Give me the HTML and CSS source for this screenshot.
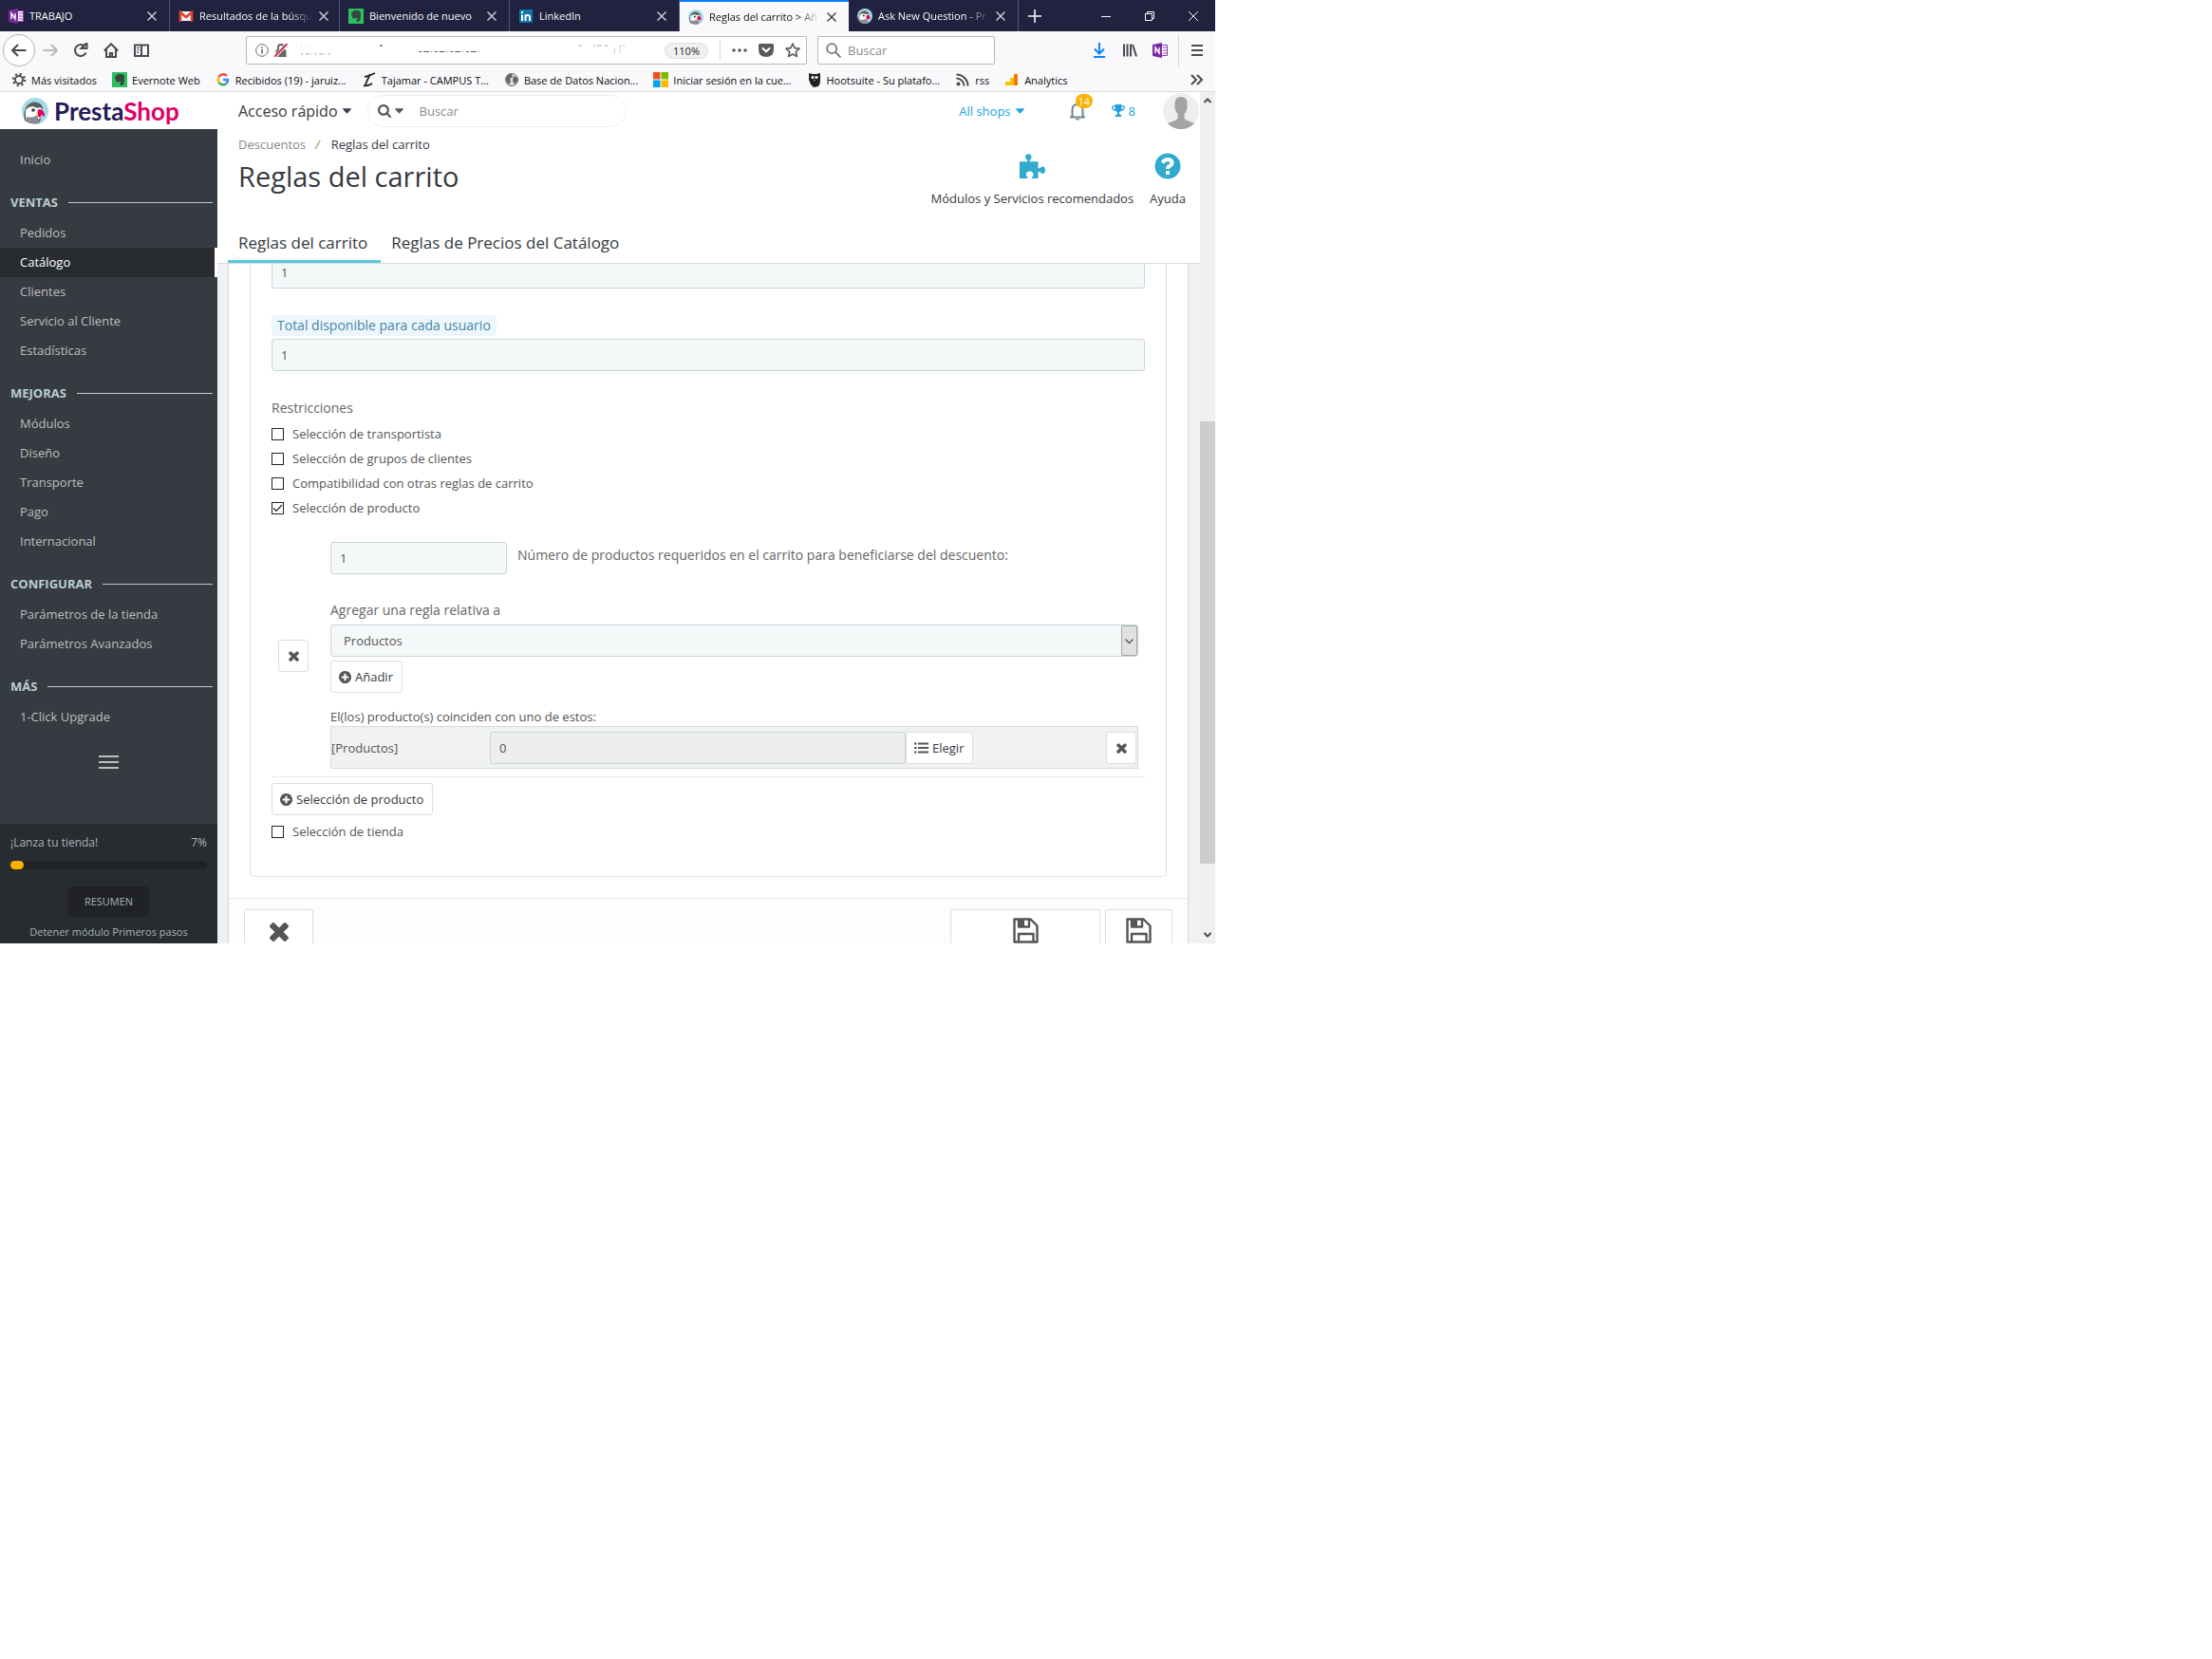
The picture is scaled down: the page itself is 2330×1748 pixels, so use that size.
FILE: index.html
```html
<!DOCTYPE html>
<html lang="es">
<head>
  <meta charset="UTF-8">
  <meta name="viewport" content="width=device-width, initial-scale=1">
  <title>Reglas del carrito</title>
  <link rel="stylesheet" href="styles.css">
</head>

<body>
  <!-- shared icons -->
  <svg class="sprite" aria-hidden="true">
    <symbol id="i-close" viewBox="0 0 12 12"><path d="M1.500 1.500l9 9M10.500 1.500l-9 9" fill="none" stroke="currentColor" stroke-width="1.500"/></symbol>
    <symbol id="i-times" viewBox="300 240 1192 1312"><path fill="currentColor" d="M1490 1322q0 40-28 68l-136 136q-28 28-68 28t-68-28l-294-294-294 294q-28 28-68 28t-68-28l-136-136q-28-28-28-68t28-68l294-294-294-294q-28-28-28-68t28-68l136-136q28-28 68-28t68 28l294 294 294-294q28-28 68-28t68 28l136 136q28 28 28 68t-28 68l-294 294 294 294q28 28 28 68z"/></symbol>
    <symbol id="i-plus" viewBox="128 128 1536 1536"><path fill="currentColor" d="M1344 960v-128q0-26-19-45t-45-19h-256v-256q0-26-19-45t-45-19h-128q-26 0-45 19t-19 45v256h-256q-26 0-45 19t-19 45v128q0 26 19 45t45 19h256v256q0 26 19 45t45 19h128q26 0 45-19t19-45v-256h256q26 0 45-19t19-45zm320-64q0 209-103 385.500t-279.500 279.500-385.500 103-385.500-103-279.500-279.500-103-385.500 103-385.500 279.500-279.500 385.500-103 385.500 103 279.500 279.500 103 385.500z"/></symbol>
    <symbol id="i-search" viewBox="64 128 1664 1664"><path fill="currentColor" d="M1216 832q0-185-131.500-316.500t-316.500-131.500-316.500 131.500-131.500 316.500 131.500 316.500 316.500 131.500 316.500-131.500 131.500-316.500zm512 832q0 52-38 90t-90 38q-54 0-90-38l-343-342q-179 124-399 124-143 0-273.500-55.500t-225-150-150-225-55.500-273.500 55.500-273.500 150-225 225-150 273.500-55.500 273.500 55.500 225 150 150 225 55.500 273.500q0 220-124 399l343 343q37 37 37 90z"/></symbol>
    <symbol id="i-caret" viewBox="0 0 10 6"><path fill="currentColor" d="M0.500 0h9q.8 0 .3.700l-4.200 4.800q-.6.500-1.200 0L.2.700Q-.3 0 .5 0z"/></symbol>
    <symbol id="i-save" viewBox="0 0 27 27"><path fill="none" stroke="currentColor" stroke-width="2.400" stroke-linejoin="round" d="M1.500 1.500h17l7 7v17h-24zM6 25v-8h15.500v8M6 2v7.500h11V2"/><path fill="currentColor" d="M6 2h6v7H6z"/></symbol>
    <symbol id="i-puffin" viewBox="0 0 28 28">
      <circle cx="14" cy="14" r="14" fill="#a4dbe8"/>
      <path fill="#5d5c60" d="M3 24C1 15 4 6 12 4.500c7-.5 11 4 10 9.500L19 26c-6 2-12 1-16-2z"/>
      <path fill="#fff" d="M4 13c3-4 8-5 12-2 3-2 6 0 6 4l-2 6-7 6c-5-1-7-2-9-5z"/>
      <path fill="#8d8c90" d="M5 20c4 1 8 1 11-2l3 8c-5 3-11 1-15-2z"/>
      <circle cx="12" cy="13" r="1.800" fill="#333"/>
      <path fill="#df0067" d="M18 12c4 0 6 3 6 8l-3-2-2 3c-3-2-4-6-1-9z"/>
      <path fill="#f9c23c" d="M17 13l-2 3 2 3z"/>
    </symbol>
    <symbol id="i-evernote" viewBox="0 0 16 16"><path fill="#2dbe60" d="M0 0h16v16H0z"/><path fill="#36473c" d="M6 2h3c3 0 4 1 4 4 0 5-1 8-3 8-2 0-2-3-.5-3L9 9c-1 2-4 2-5 0L3 5l3-3z"/></symbol>
    <symbol id="i-onenote" viewBox="0 0 16 16"><path fill="#fff" stroke="#8e44ad" d="M8 2.500h7.500v11H8zM11 5h4M11 8h4M11 11h4"/><path fill="#7a2a9f" d="M0 2l10-2v16L0 14z"/><path fill="none" stroke="#fff" stroke-width="1.400" d="M3 11V5l4 6V5"/></symbol>
  </svg>

  <div class="window">

    <!-- browser tabs -->
    <header class="tabstrip">
      <div class="tab"><svg class="fav"><use href="#i-onenote"/></svg><span class="tab-title">TRABAJO</span><button class="tab-close" aria-label="Cerrar"><svg><use href="#i-close"/></svg></button></div>
      <div class="tab"><svg class="fav" viewBox="0 0 16 16"><path fill="#f2f2f2" d="M1 3h14v10H1z"/><path fill="none" stroke="#db4437" stroke-width="2.500" d="M2 14V4l6 5 6-5v10"/></svg><span class="tab-title fade">Resultados de la búsqu</span><button class="tab-close" aria-label="Cerrar"><svg><use href="#i-close"/></svg></button></div>
      <div class="tab"><svg class="fav"><use href="#i-evernote"/></svg><span class="tab-title">Bienvenido de nuevo</span><button class="tab-close" aria-label="Cerrar"><svg><use href="#i-close"/></svg></button></div>
      <div class="tab"><svg class="fav" viewBox="0 0 16 16"><path fill="#0e76a8" d="M1 1h14v14H1z"/><path fill="none" stroke="#fff" stroke-width="2" d="M4 6.500V13M4 3v2M7.500 13V6.500M7.500 9.500q0-2.500 2.300-2.500t2.200 2.500V13"/></svg><span class="tab-title">LinkedIn</span><button class="tab-close" aria-label="Cerrar"><svg><use href="#i-close"/></svg></button></div>
      <div class="tab active"><svg class="fav"><use href="#i-puffin"/></svg><span class="tab-title fade">Reglas del carrito &gt; Añ</span><button class="tab-close" aria-label="Cerrar"><svg><use href="#i-close"/></svg></button></div>
      <div class="tab"><svg class="fav"><use href="#i-puffin"/></svg><span class="tab-title fade">Ask New Question - Pr</span><button class="tab-close" aria-label="Cerrar"><svg><use href="#i-close"/></svg></button></div>
      <button class="new-tab" aria-label="Nueva pestaña"><svg viewBox="0 0 14 14"><path d="M7 0v14M0 7h14" stroke="currentColor" stroke-width="1.600"/></svg></button>
      <div class="win-controls">
        <button aria-label="Minimizar"><svg viewBox="0 0 10 10"><path d="M0 5.500h10" stroke="currentColor"/></svg></button>
        <button aria-label="Restaurar"><svg viewBox="0 0 10 10"><path d="M.5 2.500h7v7h-7zM2.500 2.500v-2h7v7h-2" fill="none" stroke="currentColor"/></svg></button>
        <button aria-label="Cerrar ventana"><svg viewBox="0 0 10 10"><path d="M0 0l10 10M10 0L0 10" stroke="currentColor"/></svg></button>
      </div>
    </header>

    <!-- navigation bar -->
    <div class="navbar">
      <button class="nav-btn back" aria-label="Atrás"><svg viewBox="0 0 16 16"><path d="M15.500 8H1.500M7 2L1 8l6 6"/></svg></button>
      <button class="nav-btn dim" aria-label="Adelante"><svg viewBox="0 0 16 16"><path d="M.5 8h14M9 2l6 6-6 6"/></svg></button>
      <button class="nav-btn" aria-label="Recargar"><svg viewBox="0 0 16 16"><path d="M13.500 10.500A6 6 0 1 1 12.500 4M14.500 0v6h-6z"/></svg></button>
      <button class="nav-btn" aria-label="Inicio"><svg viewBox="0 0 16 16"><path d="M.8 8.500L8 1.300l7.200 7.200M3 7v8h10V7M6.800 15v-4h2.400v4"/></svg></button>
      <button class="nav-btn" aria-label="Barra lateral"><svg viewBox="0 0 16 16"><path d="M1 2.500h14v11.500H1zM8 2.500V14"/><path class="thin" d="M3 5.500h3M3 8h3M3 10.500h2"/></svg></button>

      <div class="urlbar">
        <svg class="ico-14" viewBox="0 0 14 14"><circle cx="7" cy="7" r="6.300" fill="none" stroke="#666"/><path d="M7 6v4.500M7 3.500v1.500" stroke="#555" stroke-width="1.500"/></svg>
        <svg class="ico-14" viewBox="0 0 14 14"><path fill="#666" d="M1.500 6.500h11V14h-11z"/><path fill="none" stroke="#666" stroke-width="2" d="M4 7V4a3 3 0 0 1 6 0v3"/><path stroke="#fff" stroke-width="3.500" d="M1 13.500L13 .5"/><path stroke="#d7264c" stroke-width="2" d="M0 14L13.500 0"/></svg>
        <!-- remains of the scrubbed address -->
        <svg class="scrubbed" viewBox="0 0 390 28" preserveAspectRatio="xMinYMid meet">
          <path stroke="#999" stroke-dasharray="2 3 4 2 1 3" d="M2 18h34"/><path stroke="#bbb" stroke-dasharray="1 5" d="M2 10h8"/><path stroke="#222" stroke-width="1.500" d="M88 9h2"/><path stroke="#555" stroke-dasharray="3 2 6 2 1 3" d="M130 15.500h68"/><path stroke="#aaa" stroke-dasharray="4 12 2 2 5 3" d="M303 9h50"/><path stroke="#ccc" d="M342 11v7M348 9v8"/>
        </svg>
        <button class="zoom">110%</button>
        <span class="sep"></span>
        <svg class="ico-16" viewBox="0 0 16 16" fill="#5a5a5e"><circle cx="2" cy="8" r="1.800"/><circle cx="8" cy="8" r="1.800"/><circle cx="14" cy="8" r="1.800"/></svg>
        <svg class="ico-16" viewBox="0 0 16 16"><path fill="#5a5a5e" d="M1.500 1h13q1.500 0 1.500 1.500V7q0 8-8 8T0 7V2.500Q0 1 1.500 1z"/><path fill="none" stroke="#fff" stroke-width="2" stroke-linecap="round" d="M4.500 6L8 9.300 11.500 6"/></svg>
        <svg class="ico-16" viewBox="0 0 16 16"><path fill="none" stroke="#5a5a5e" stroke-width="1.600" stroke-linejoin="round" d="M8 1l2.100 4.600 5 .5-3.800 3.400 1.100 5L8 12l-4.400 2.500 1.100-5L.9 6.100l5-.5z"/></svg>
      </div>

      <label class="searchbar">
        <svg class="ico-16" viewBox="0 0 16 16"><path fill="none" stroke="#777" stroke-width="1.800" d="M10 10l5.500 5.500M11.200 6.200a5 5 0 1 1-10 0 5 5 0 0 1 10 0z"/></svg>
        <input type="text" placeholder="Buscar" aria-label="Buscar en la web">
      </label>

      <button class="nav-btn blue" aria-label="Descargas"><svg viewBox="0 0 16 16"><path d="M8 0v11M3 6.500l5 5 5-5M2 15h12"/></svg></button>
      <button class="nav-btn" aria-label="Catálogo"><svg viewBox="0 0 16 16"><path d="M2 1.500v13M5.500 1.500v13M9 1.500v13M11 2l4 12.500"/></svg></button>
      <button class="nav-btn plain" aria-label="OneNote"><svg><use href="#i-onenote"/></svg></button>
      <span class="sep tall"></span>
      <button class="nav-btn" aria-label="Menú"><svg viewBox="0 0 16 16"><path d="M2 3h12M2 8h12M2 13h12"/></svg></button>
    </div>

    <!-- bookmarks -->
    <nav class="bookmarks">
      <a href="#"><svg class="fav" viewBox="0 0 16 16"><circle cx="8" cy="8" r="4" fill="none" stroke="#4a4a4f" stroke-width="1.800"/><circle cx="8" cy="8" r="6" fill="none" stroke="#4a4a4f" stroke-width="2.500" stroke-dasharray="2 2.710"/></svg>Más visitados</a>
      <a href="#"><svg class="fav"><use href="#i-evernote"/></svg>Evernote Web</a>
      <a href="#"><svg class="fav" viewBox="0 0 16 16" fill="none" stroke-width="2.400"><path stroke="#ea4335" d="M3.500 5.300A5 5 0 0 1 11.800 4"/><path stroke="#fbbc05" d="M3.500 5.300a5 5 0 0 0 0 5.400"/><path stroke="#34a853" d="M3.500 10.700a5 5 0 0 0 7.700 1.400"/><path stroke="#4285f4" d="M11.200 12.100A5 5 0 0 0 13 8H8"/></svg>Recibidos (19) - jaruiz...</a>
      <a href="#"><svg class="fav" viewBox="0 0 16 16"><path fill="none" stroke="#222" stroke-width="1.800" d="M3 5q5-1 11-4M9 2Q6 8 4 13M2 14q5 1 9-2"/></svg>Tajamar - CAMPUS T...</a>
      <a href="#"><svg class="fav" viewBox="0 0 16 16"><circle cx="8" cy="8" r="6.500" fill="#ddd" stroke="#666"/><path fill="#666" d="M2 6q3-5 6-4l1 3-3 2 1 3-2 3Q2 11 2 6zM10 4l4 2v4l-3 3-2-4z"/></svg>Base de Datos Nacion...</a>
      <a href="#"><svg class="fav" viewBox="0 0 16 16"><path fill="#f25022" d="M0 0h7.500v7.500H0z"/><path fill="#7fba00" d="M8.500 0H16v7.500H8.500z"/><path fill="#00a4ef" d="M0 8.500h7.500V16H0z"/><path fill="#ffb900" d="M8.500 8.500H16V16H8.500z"/></svg>Iniciar sesión en la cue...</a>
      <a href="#"><svg class="fav" viewBox="0 0 16 16"><path fill="#222" d="M2 1l4 1h4l4-1v7q0 5-2 7l-5 1-3-3-2-5z"/><circle cx="6" cy="5.500" r="1.600" fill="#fff"/><circle cx="10" cy="5.500" r="1.600" fill="#fff"/><path fill="#fff" d="M7.300 8h1.400L8 9.500z"/></svg>Hootsuite - Su platafo...</a>
      <a href="#"><svg class="fav" viewBox="0 0 16 16"><circle cx="3.500" cy="12.500" r="2" fill="#4a4a4f"/><path fill="none" stroke="#4a4a4f" stroke-width="2" d="M1.500 6.500a8 8 0 0 1 8 8M1.500 2.500a12 12 0 0 1 12 12"/></svg>rss</a>
      <a href="#"><svg class="fav" viewBox="0 0 16 16"><path fill="#ffc107" d="M1 10h5v4H1zM6 6h5v8H6z"/><path fill="#f57c00" d="M10 2h4v12h-4z"/></svg>Analytics</a>
      <button class="more" aria-label="Más marcadores"><svg viewBox="0 0 14 12"><path fill="none" stroke="currentColor" stroke-width="2" d="M1 1l5 5-5 5M7 1l5 5-5 5"/></svg></button>
    </nav>

    <div class="page">

      <!-- left column -->
      <aside class="side">
        <a class="logo" href="#"><svg><use href="#i-puffin"/></svg><span>Presta<b>Shop</b></span></a>
        <nav class="menu">
          <a href="#">Inicio</a>
          <h2>VENTAS</h2>
          <a href="#">Pedidos</a>
          <a href="#" class="current">Catálogo</a>
          <a href="#">Clientes</a>
          <a href="#">Servicio al Cliente</a>
          <a href="#">Estadísticas</a>
          <h2>MEJORAS</h2>
          <a href="#">Módulos</a>
          <a href="#">Diseño</a>
          <a href="#">Transporte</a>
          <a href="#">Pago</a>
          <a href="#">Internacional</a>
          <h2>CONFIGURAR</h2>
          <a href="#">Parámetros de la tienda</a>
          <a href="#">Parámetros Avanzados</a>
          <h2>MÁS</h2>
          <a href="#">1-Click Upgrade</a>
          <button class="burger" aria-label="Contraer menú"><svg viewBox="0 0 21 14"><path d="M0 1h21M0 7h21M0 13h21" stroke="currentColor" stroke-width="2"/></svg></button>
        </nav>
        <div class="onboarding">
          <div class="launch"><span>¡Lanza tu tienda!</span><span>7%</span></div>
          <div class="bar"><div class="bar-fill" style="width: 7%"></div></div>
          <button class="resume">RESUMEN</button>
          <a href="#">Detener módulo Primeros pasos</a>
        </div>
      </aside>

      <main class="content">
        <div class="topbar">
          <button class="quick">Acceso rápido <svg class="caret"><use href="#i-caret"/></svg></button>
          <div class="search">
            <button aria-label="Buscar en"><svg class="ico-14"><use href="#i-search"/></svg><svg class="caret"><use href="#i-caret"/></svg></button>
            <input type="text" placeholder="Buscar" aria-label="Buscar">
          </div>
          <button class="shops">All shops <svg class="caret"><use href="#i-caret"/></svg></button>
          <button class="bell" aria-label="Notificaciones">
            <svg viewBox="0 0 18 20"><path fill="none" stroke="#6c868e" stroke-width="2" d="M1 16.500h16M3.500 16V9q0-6 5.500-6t5.500 6v7M9 3V1"/><path fill="#6c868e" d="M6.500 18h5q-2.500 3.500-5 0z"/></svg>
            <span class="badge">14</span>
          </button>
          <a class="trophy" href="#"><svg viewBox="0 0 14 13"><path fill="currentColor" d="M3.500 0h7v5q-.5 2.500-2.500 3.200V10q2 .3 2.500 3h-7Q4 10.300 6 10V8.200Q4 7.500 3.500 5z"/><path fill="none" stroke="currentColor" stroke-width="1.200" d="M4 2H.7q0 4.200 4 4.500M10 2h3.300q0 4.200-4 4.500"/></svg>8</a>
          <svg class="avatar" viewBox="0 0 38 38"><circle cx="19" cy="19" r="19" fill="#eee"/><path fill="#a3a3a3" d="M12.500 11q0-7 6.500-7t6.500 7v5q-1 4-3 6v4q0 2 3 3l7.500 3a19 19 0 0 1-28 0l7.500-3q3-1 3-3v-4q-2-2-3-6z"/></svg>
        </div>

        <div class="page-head">
          <div>
            <div class="crumbs"><a href="#">Descuentos</a><i>/</i><span>Reglas del carrito</span></div>
            <h1>Reglas del carrito</h1>
          </div>
          <div class="head-actions">
            <a href="#"><svg viewBox="0 0 30 28"><path fill="currentColor" d="M1 9h9V7.500Q7.500 6 7.500 3.800 7.800.3 11 .3t3.500 3.500Q14.300 6 12.500 7.500V9H22v7.500h2q1.300-2 3-2 3 .3 3 4t-3 4q-1.700 0-3-2.200h-2V28h-7v-1.500q2-1.300 1.700-3.500-.7-3-4-3.200-3.800.2-4.500 3.200 0 2.200 2 3.500V28H1z"/></svg>Módulos y Servicios recomendados</a>
            <a href="#"><svg viewBox="0 0 28 28"><circle cx="14" cy="14" r="13.500" fill="currentColor"/><path fill="none" stroke="#fff" stroke-width="4" d="M8.500 10.500q2-3.500 5.500-3.500 4.500.3 4.500 3.500 0 2-2.300 3.300-2.200 1.200-2.200 3.200"/><path fill="#fff" d="M12 19h4v4h-4z"/></svg>Ayuda</a>
          </div>
        </div>

        <nav class="page-tabs">
          <a href="#" class="current">Reglas del carrito</a>
          <a href="#">Reglas de Precios del Catálogo</a>
        </nav>

        <div class="scroll-area">
          <form class="panel">
            <div class="box">
              <input class="field first" type="text" value="1" aria-label="Total disponible">

              <label class="hint" for="per-user">Total disponible para cada usuario</label>
              <input class="field" type="text" id="per-user" value="1">

              <p class="title">Restricciones</p>
              <label class="check"><input type="checkbox">Selección de transportista</label>
              <label class="check"><input type="checkbox">Selección de grupos de clientes</label>
              <label class="check"><input type="checkbox">Compatibilidad con otras reglas de carrito</label>
              <label class="check"><input type="checkbox" checked>Selección de producto</label>

              <div class="group">
                <button type="button" class="btn square" aria-label="Eliminar"><svg class="times"><use href="#i-times"/></svg></button>
                <div>
                  <div class="qty">
                    <input class="field" type="text" id="qty" value="1">
                    <label for="qty">Número de productos requeridos en el carrito para beneficiarse del descuento:</label>
                  </div>
                  <label class="rule-label" for="rule">Agregar una regla relativa a</label>
                  <select id="rule" class="field"><option>Productos</option></select>
                  <button type="button" class="btn"><svg class="plus"><use href="#i-plus"/></svg>Añadir</button>
                  <p class="match">El(los) producto(s) coinciden con uno de estos:</p>
                  <table class="rules">
                    <tr>
                      <td class="name">[Productos]</td>
                      <td class="count"><input class="field" type="text" value="0" aria-label="Productos" disabled></td>
                      <td><button type="button" class="btn"><svg class="list" viewBox="0 0 15 12"><path stroke="currentColor" stroke-width="2.200" d="M0 1.500h2.500M4 1.500h11M0 6h2.500M4 6h11M0 10.500h2.500M4 10.500h11"/></svg>Elegir</button></td>
                      <td class="last"><button type="button" class="btn square" aria-label="Quitar"><svg class="times"><use href="#i-times"/></svg></button></td>
                    </tr>
                  </table>
                </div>
              </div>

              <hr>
              <button type="button" class="btn"><svg class="plus"><use href="#i-plus"/></svg>Selección de producto</button>
              <label class="check shop"><input type="checkbox">Selección de tienda</label>
            </div>

            <div class="panel-footer">
              <button type="button" class="big cancel" aria-label="Cancelar"><svg><use href="#i-times"/></svg></button>
              <button type="submit" class="big wide" aria-label="Guardar y permanecer"><svg><use href="#i-save"/></svg></button>
              <button type="submit" class="big" aria-label="Guardar"><svg><use href="#i-save"/></svg></button>
            </div>
          </form>
        </div>
      </main>

      <!-- window scrollbar -->
      <div class="scrollbar">
        <svg viewBox="0 0 10 6"><path d="M1.500 5L5 1.500 8.500 5"/></svg>
        <div class="track"><div class="thumb"></div></div>
        <svg viewBox="0 0 10 6"><path d="M1.500 1L5 4.500 8.500 1"/></svg>
      </div>
    </div>
  </div>
</body>

</html>
```

FILE: styles.css
```css
* {
  box-sizing: border-box;
}
body {
  margin: 0;
  background: #fff;
  font-family: "Open Sans", "Noto Sans", sans-serif;
  font-size: 13px;
  color: #363a41;
}
a {
  color: inherit;
  text-decoration: none;
}
button,
input,
select {
  margin: 0;
  font: inherit;
  color: inherit;
}
button {
  display: flex;
  align-items: center;
  justify-content: center;
  padding: 0;
  border: none;
  background: none;
  cursor: pointer;
}
input {
  outline: none;
}
svg {
  display: block;
  flex: none;
}
.sprite {
  position: absolute;
  width: 0;
  height: 0;
}
.fav,
.ico-16 {
  width: 16px;
  height: 16px;
}
.ico-14 {
  width: 14px;
  height: 14px;
}
.caret {
  width: 9px;
  height: 6px;
}
.window {
  max-width: 1280px;
}

/* browser tabs */
.tabstrip {
  display: flex;
  height: 33px;
  background: #20223f;
  color: #f9f9fa;
  font-size: 11px;
}
.tab {
  display: flex;
  flex: 0 1 179px;
  align-items: center;
  gap: 6px;
  min-width: 0;
  padding: 0 12px 0 9px;
  border-right: 1px solid #555770;
}
.tab-title {
  flex: 1;
  white-space: nowrap;
}
.tab-title.fade {
  mask-image: linear-gradient(to left, transparent, #000 24px);
}
.tab-close {
  color: #c8c8d0;
}
.tab-close svg {
  width: 12px;
  height: 12px;
}
.tab.active {
  flex-basis: 178px;
  border-top: 2px solid #0a84ff;
  border-right: none;
  background: #f9f9fb;
  color: #0c0c0d;
}
.tab.active .tab-close {
  color: #4a4a4f;
}
.new-tab {
  width: 34px;
}
.new-tab svg {
  width: 14px;
  height: 14px;
}
.win-controls {
  display: flex;
  margin-left: auto;
}
.win-controls button {
  width: 46px;
}
.win-controls svg {
  width: 10px;
  height: 10px;
}

/* navigation bar */
.navbar {
  display: flex;
  align-items: center;
  height: 40px;
  padding: 0 3px;
  background: #f9f9fb;
  color: #4a4a4f;
}
.nav-btn {
  width: 32px;
  height: 34px;
}
.nav-btn svg {
  width: 16px;
  height: 16px;
  fill: none;
  stroke: currentColor;
  stroke-width: 2;
}
.nav-btn .thin {
  stroke-width: 1;
}
.nav-btn.plain svg {
  stroke: none;
  stroke-width: 1;
}
.nav-btn.back {
  width: 34px;
  border: 1px solid #b1b1b5;
  border-radius: 50%;
  background: #fff;
}
.nav-btn.dim {
  color: #b8b8bb;
}
.nav-btn.blue {
  color: #0a84ff;
}
.urlbar,
.searchbar {
  display: flex;
  align-items: center;
  height: 30px;
  border: 1px solid #b9b9bc;
  border-radius: 2px;
  background: #fff;
}
.urlbar {
  flex: 1;
  gap: 6px;
  min-width: 0;
  margin-left: 94px;
  padding: 0 6px 0 9px;
}
.urlbar .ico-16 {
  margin-left: 6px;
}
.scrubbed {
  flex: 1;
  min-width: 0;
  height: 28px;
  margin-left: 6px;
  fill: none;
}
.zoom {
  height: 17px;
  padding: 0 8px;
  border: 1px solid #ddd;
  border-radius: 9px;
  background: #f0f0f1;
  color: #222;
  font-size: 11px;
}
.sep {
  width: 1px;
  height: 22px;
  margin-left: 6px;
  background: #d7d7db;
}
.sep.tall {
  height: 34px;
  margin: 0 3px;
}
.searchbar {
  gap: 7px;
  width: 187px;
  margin: 0 94px 0 11px;
  padding: 0 8px;
}
.searchbar input {
  width: 100%;
  padding: 0;
  border: none;
}

/* bookmarks */
.bookmarks {
  display: flex;
  align-items: center;
  gap: 16px;
  height: 24px;
  padding: 0 12px 1px;
  border-bottom: 1px solid #d9d9db;
  background: #f9f9fb;
  color: #0c0c0d;
  font-size: 11px;
  white-space: nowrap;
}
.bookmarks a {
  display: flex;
  align-items: center;
  gap: 5px;
}
.more {
  margin-left: auto;
  color: #4a4a4f;
}
.more svg {
  width: 14px;
  height: 12px;
}

/* shop page */
.page {
  display: grid;
  grid-template-columns: 229px minmax(0, 1fr) 16px;
}
.side {
  display: flex;
  flex-direction: column;
  background: #363a41;
}
.logo {
  display: flex;
  align-items: center;
  gap: 6px;
  height: 39px;
  padding-left: 23px;
  background: #fff;
  color: #251b5b;
  font-family: Lato, sans-serif;
  font-size: 26px;
  font-weight: 700;
}
.logo svg {
  width: 28px;
  height: 28px;
}
.logo b {
  color: #df0067;
  font-weight: 700;
}
.menu {
  padding-top: 17px;
}
.menu a {
  display: block;
  padding-left: 21px;
  color: #bebebe;
  line-height: 31px;
}
.menu a.current {
  border-right: 3px solid #fff;
  background: #282b30;
  color: #fff;
}
.menu h2 {
  display: flex;
  align-items: center;
  gap: 11px;
  margin: 19px 5px 7px 11px;
  color: #bbcdd2;
  font-size: 13px;
  line-height: 20px;
}
.menu h2::after {
  flex: 1;
  height: 1px;
  background: #bbcdd2;
  content: "";
}
.burger {
  margin: 25px auto;
  color: #bebebe;
}
.burger svg {
  width: 21px;
  height: 14px;
}
.onboarding {
  margin-top: auto;
  height: 126px;
  padding: 10px 11px 0;
  overflow: hidden;
  background: #282b30;
  color: #a5b5ba;
  font-size: 11px;
  line-height: 20px;
  text-align: center;
}
.launch {
  display: flex;
  justify-content: space-between;
  font-size: 12px;
}
.bar {
  height: 9px;
  margin: 9px 0 18px;
  border-radius: 5px;
  background: #202226;
}
.bar-fill {
  height: 9px;
  border-radius: 5px;
  background: #fbb100;
}
.resume {
  height: 32px;
  margin: 0 auto 6px;
  padding: 0 17px;
  border-radius: 3px;
  background: #202226;
}

/* top of the content column */
.topbar {
  display: flex;
  align-items: center;
  height: 39px;
  padding-left: 22px;
}
.topbar button {
  gap: 5px;
}
.quick {
  font-size: 16px;
}
.search {
  display: flex;
  align-items: center;
  gap: 17px;
  width: 273px;
  height: 34px;
  margin-left: 17px;
  padding-left: 10px;
  border: 1px solid #eee;
  border-radius: 17px;
  color: #555;
}
.search button {
  gap: 4px;
}
.search input {
  width: 100%;
  padding: 0;
  border: none;
  background: none;
}
::placeholder {
  color: #8a8a8a;
  opacity: 1;
}
.shops {
  margin-left: auto;
  color: #22a2e0;
}
.bell {
  position: relative;
  margin-left: 47px;
}
.bell > svg {
  width: 18px;
  height: 20px;
}
.badge {
  position: absolute;
  top: -8px;
  left: 7px;
  padding: 0 3px;
  border-radius: 8px;
  background: #fbb100;
  color: #fff;
  font-size: 11px;
  line-height: 15px;
}
.trophy {
  display: flex;
  align-items: center;
  gap: 4px;
  margin: 0 29px 0 27px;
  color: #22a2e0;
}
.trophy svg {
  width: 14px;
  height: 13px;
}
.avatar {
  width: 38px;
  height: 38px;
  margin-right: 1px;
}
.page-head {
  display: flex;
  justify-content: space-between;
  height: 99px;
  padding: 7px 15px 0 22px;
}
.crumbs {
  display: flex;
  line-height: 18px;
}
.crumbs a {
  color: #85888c;
}
.crumbs i {
  margin: 0 12px 0 10px;
  color: #72a050;
}
h1 {
  margin: 6px 0 0;
  font-size: 29px;
  font-weight: 400;
  line-height: 38px;
}
.head-actions {
  display: flex;
  gap: 17px;
  padding-top: 18px;
}
.head-actions a {
  line-height: 20px;
}
.head-actions svg {
  width: 28px;
  height: 28px;
  margin: 0 auto 10px;
  color: #30abcd;
}
.page-tabs {
  display: flex;
  height: 43px;
  padding-left: 11px;
  border-bottom: 1px solid #d8dbdd;
  font-size: 17px;
  line-height: 42px;
}
.page-tabs a {
  height: 42px;
  padding: 0 14px 0 11px;
}
.page-tabs a.current {
  border-bottom: 3px solid #54c8dd;
}

/* form */
.scroll-area {
  overflow: hidden;
  padding: 0 12px 0 11px;
  background: #eff1f2;
}
.panel {
  display: block;
  border: solid #d3d8db;
  border-width: 0 1px;
  background: #fff;
}
.box {
  margin: 0 22px;
  padding: 0 22px 34px;
  border: 1px solid #dcdee0;
  border-top: none;
  border-radius: 0 0 5px 5px;
  color: #555;
}
.field {
  display: block;
  width: 100%;
  height: 34px;
  padding: 0 9px;
  border: 1px solid #c7d6db;
  border-radius: 3px;
  background: #f5f8f9;
  color: #555;
}
.field.first {
  margin-top: -8px;
}
.hint {
  display: inline-block;
  margin: 28px 0 3px;
  padding: 0 6px;
  border-radius: 3px;
  background: #edf7fb;
  color: #4585a9;
  font-size: 14px;
  line-height: 22px;
  vertical-align: top;
}
.title {
  margin: 29px 0 4px;
  color: #666;
  font-size: 14px;
  line-height: 20px;
}
.check {
  display: flex;
  align-items: center;
  gap: 9px;
  height: 26px;
}
.check input {
  width: 13px;
  height: 13px;
  margin: 0;
  border: 1px solid #222;
  appearance: none;
  background: #fff;
}
.check input:checked {
  background: url("data:image/svg+xml,%3Csvg xmlns='http://www.w3.org/2000/svg' viewBox='0 0 11 11'%3E%3Cpath d='M1 5.500l3 3L10 2' fill='none' stroke='%23222' stroke-width='1.200'/%3E%3C/svg%3E");
}
.group {
  display: grid;
  grid-template-columns: 55px minmax(0, 1fr);
  align-items: center;
  margin-top: 23px;
  padding: 0 7px;
}
.qty {
  display: flex;
  gap: 11px;
  margin-bottom: 28px;
}
.qty .field {
  width: 186px;
}
.qty label,
.rule-label {
  color: #666;
  font-size: 14px;
  line-height: 20px;
}
.qty label {
  padding-top: 4px;
}
.rule-label {
  display: block;
  margin-bottom: 5px;
}
select.field {
  margin-bottom: 4px;
  padding: 0 13px;
  appearance: none;
  background: #f5f8f9 url("data:image/svg+xml,%3Csvg xmlns='http://www.w3.org/2000/svg' width='17' height='32'%3E%3Cpath d='M.5.5h16v31H.5z' fill='%23e1e1e1' stroke='%23a5a9ab'/%3E%3Cpath d='M4.500 14.500l4 4 4-4' fill='none' stroke='%23555' stroke-width='1.300'/%3E%3C/svg%3E") no-repeat right center;
}
.btn {
  gap: 4px;
  height: 34px;
  padding: 0 9px 0 8px;
  border: 1px solid #dcdee0;
  border-radius: 3px;
  background: #fff;
  color: #363a41;
}
.btn svg {
  color: #555;
}
.btn.square {
  width: 32px;
  padding: 0;
}
.plus {
  width: 13px;
  height: 13px;
}
.times {
  width: 11px;
  height: 12px;
}
.list {
  width: 15px;
  height: 12px;
}
.match {
  margin: 15px 0 0;
  line-height: 20px;
}
.rules {
  width: 100%;
  height: 45px;
  border: 1px solid #d8dbdd;
  border-spacing: 0;
  background: #eff1f2;
}
.rules td {
  padding: 0;
}
.rules .name {
  width: 167px;
}
.rules .count {
  width: 438px;
}
.rules .last {
  width: 33px;
}
.rules .field:disabled {
  background: #eee;
}
hr {
  margin: 8px 0 6px;
  border: none;
  border-top: 1px solid #e6e8ea;
}
.check.shop {
  margin-top: 4px;
}
.panel-footer {
  display: flex;
  gap: 5px;
  margin-top: 22px;
  padding: 11px 16px 0;
  border-top: 1px solid #e6e8ea;
  background: #fcfdfe;
}
.big {
  width: 71px;
  height: 36px;
  border: 1px solid #dcdee0;
  border-bottom: none;
  border-radius: 3px 3px 0 0;
  background: #fff;
  color: #555;
}
.big svg {
  width: 27px;
  height: 27px;
  margin-top: 8px;
}
.big.cancel {
  width: 73px;
  margin-right: auto;
}
.big.cancel svg {
  width: 22px;
  height: 22px;
}
.big.wide {
  width: 158px;
}

/* scrollbar */
.scrollbar {
  display: flex;
  flex-direction: column;
  align-items: center;
  padding: 6px 0;
  background: #f0f0f0;
}
.scrollbar svg {
  width: 10px;
  height: 6px;
  fill: none;
  stroke: #505050;
  stroke-width: 2;
}
.track {
  display: flex;
  flex: 1;
  flex-direction: column;
  width: 100%;
  padding: 5px 0;
}
.track::before {
  flex: 330;
  content: "";
}
.track::after {
  flex: 67;
  content: "";
}
.thumb {
  flex: 466;
  background: #cdcdcd;
}
```
